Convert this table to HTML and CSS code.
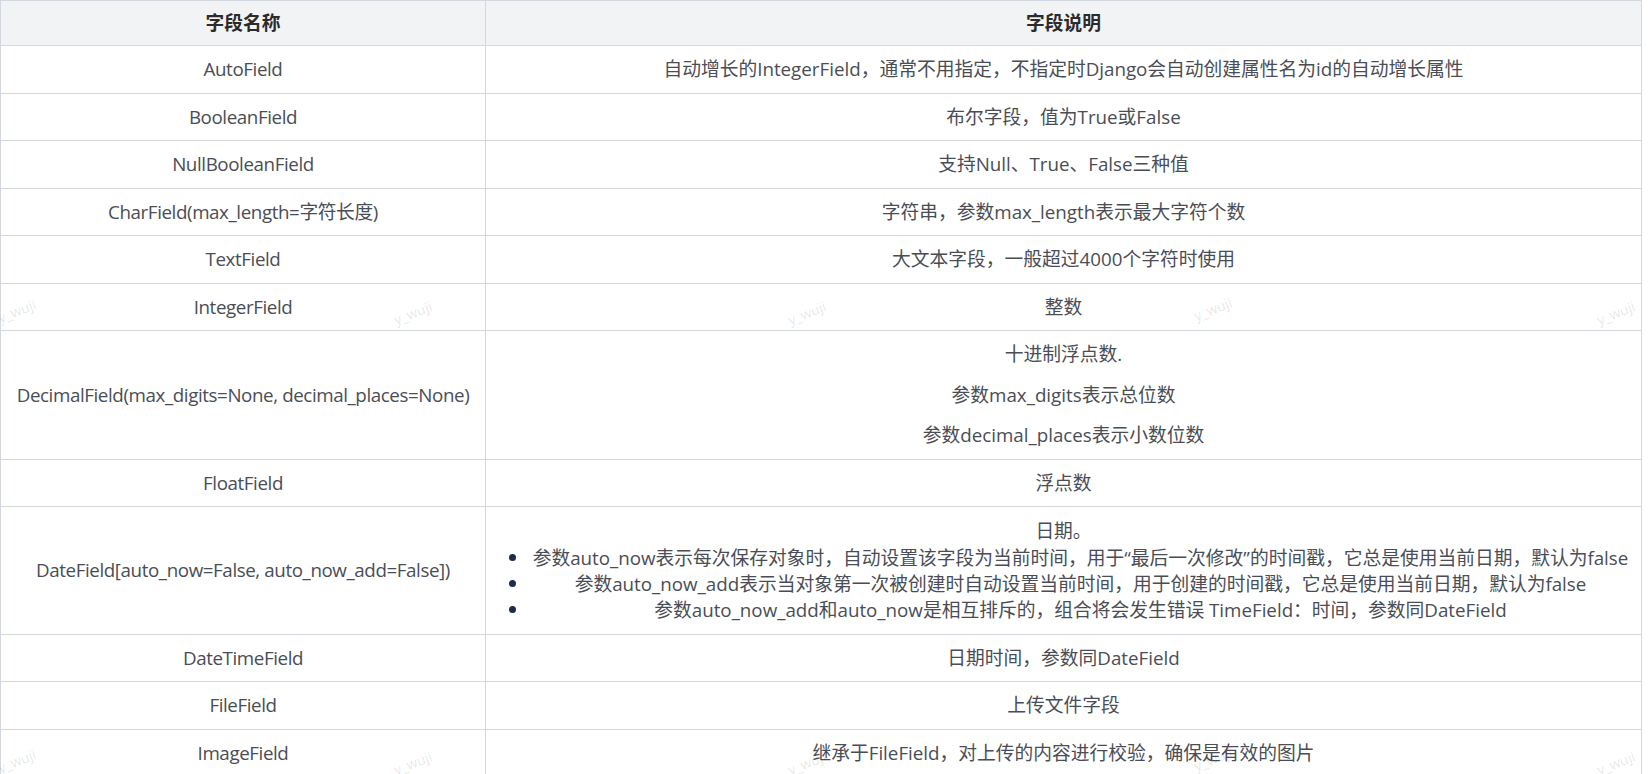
FILE: index.html
```html
<!DOCTYPE html>
<html lang="zh-CN">
<head>
<meta charset="utf-8">
<title>Django 字段类型</title>
<link rel="stylesheet" href="styles.css">
</head>
<body>
<div class="page">
  <table class="fields">
    <colgroup>
      <col class="col-name">
      <col class="col-desc">
    </colgroup>
    <thead>
      <tr><th>字段名称</th><th>字段说明</th></tr>
    </thead>
    <tbody>
      <tr><td class="name">AutoField</td><td>自动增长的IntegerField，通常不用指定，不指定时Django会自动创建属性名为id的自动增长属性</td></tr>
      <tr><td class="name">BooleanField</td><td>布尔字段，值为True或False</td></tr>
      <tr><td class="name">NullBooleanField</td><td>支持Null、True、False三种值</td></tr>
      <tr><td class="name">CharField(max_length=字符长度)</td><td>字符串，参数max_length表示最大字符个数</td></tr>
      <tr><td class="name">TextField</td><td>大文本字段，一般超过4000个字符时使用</td></tr>
      <tr><td class="name">IntegerField</td><td>整数</td></tr>
      <tr><td class="name">DecimalField(max_digits=None, decimal_places=None)</td>
        <td class="multi">
          <p>十进制浮点数.</p>
          <p>参数max_digits表示总位数</p>
          <p>参数decimal_places表示小数位数</p>
        </td></tr>
      <tr><td class="name">FloatField</td><td>浮点数</td></tr>
      <tr><td class="name">DateField[auto_now=False, auto_now_add=False])</td>
        <td class="list-cell">
          <div class="lead">日期。</div>
          <ul>
            <li>参数auto_now表示每次保存对象时，自动设置该字段为当前时间，用于“最后一次修改”的时间戳，它总是使用当前日期，默认为false</li>
            <li>参数auto_now_add表示当对象第一次被创建时自动设置当前时间，用于创建的时间戳，它总是使用当前日期，默认为false</li>
            <li>参数auto_now_add和auto_now是相互排斥的，组合将会发生错误 TimeField：时间，参数同DateField</li>
          </ul>
        </td></tr>
      <tr><td class="name">DateTimeField</td><td>日期时间，参数同DateField</td></tr>
      <tr><td class="name">FileField</td><td>上传文件字段</td></tr>
      <tr><td class="name">ImageField</td><td>继承于FileField，对上传的内容进行校验，确保是有效的图片</td></tr>
    </tbody>
  </table>

  <div class="watermarks" aria-hidden="true">
    <span class="wm" style="left:2px;top:308px">y_wuji</span>
    <span class="wm" style="left:398px;top:310px">y_wuji</span>
    <span class="wm" style="left:792px;top:310px">y_wuji</span>
    <span class="wm" style="left:1198px;top:306px">y_wuji</span>
    <span class="wm" style="left:1601px;top:310px">y_wuji</span>
    <span class="wm" style="left:2px;top:758px">y_wuji</span>
    <span class="wm" style="left:398px;top:760px">y_wuji</span>
    <span class="wm" style="left:792px;top:760px">y_wuji</span>
    <span class="wm" style="left:1198px;top:756px">y_wuji</span>
    <span class="wm" style="left:1601px;top:760px">y_wuji</span>
  </div>
</div>
</body>
</html>
```

FILE: styles.css
```css
html, body {
  margin: 0;
  padding: 0;
  background: #ffffff;
}

body {
  font-family: "Open Sans", "Noto Sans CJK SC", sans-serif;
  font-size: 18.75px;
  color: #4a4d55;
  overflow: hidden;
}

.page {
  position: relative;
  width: 1648px;
  height: 774px;
  overflow: hidden;
}

.fields {
  width: 1642px;
  border-collapse: collapse;
  table-layout: fixed;
}

.col-name { width: 485px; }

.fields th,
.fields td {
  border: 1px solid #d3d8e0;
  text-align: center;
  vertical-align: middle;
  line-height: 26px;
  padding: 10.25px 10px;
}

.fields td.name {
  padding-left: 6px;
  padding-right: 6px;
  letter-spacing: -0.4px;
  white-space: nowrap;
}

.fields th {
  background: #f2f3f5;
  color: #2b2b2b;
  font-weight: 700;
  padding: 9px 10px;
}

.multi p {
  margin: 0 0 14.5px;
}

.multi p:last-child {
  margin-bottom: 0;
}

.list-cell .lead {
  line-height: 27px;
}

.list-cell ul {
  margin: 1px 0 0;
  padding-left: 34px;
}

.list-cell li {
  line-height: 26px;
}

.list-cell li::marker {
  color: #1d2b4c;
  font-size: 20px;
}

.watermarks {
  position: absolute;
  inset: 0;
  pointer-events: none;
}

.wm {
  position: absolute;
  font-family: "Open Sans", sans-serif;
  font-size: 14px;
  color: rgba(0, 0, 0, 0.11);
  transform: rotate(-22deg);
  transform-origin: left bottom;
  white-space: nowrap;
}
```
